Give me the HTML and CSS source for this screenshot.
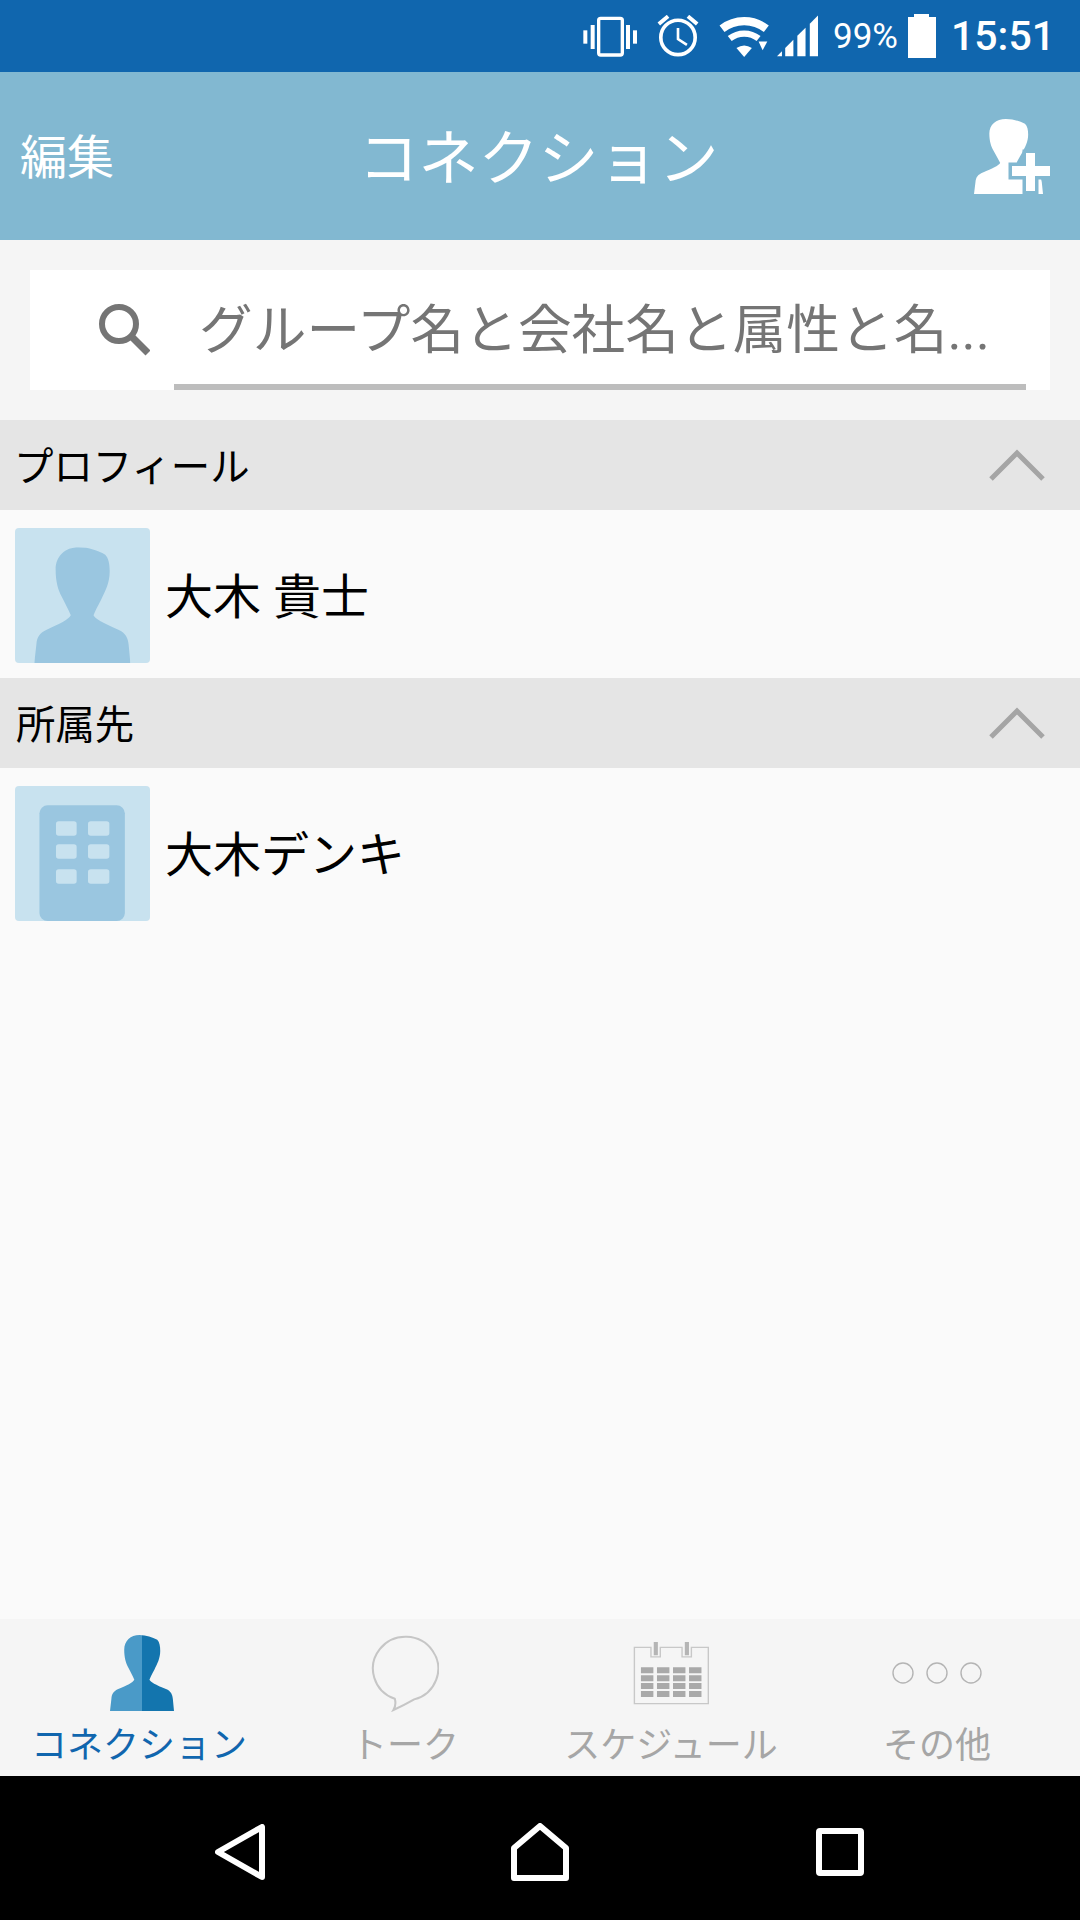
FILE: index.html
```html
<!DOCTYPE html>
<html lang="ja">
<head>
    <meta charset="UTF-8">
    <meta name="viewport" content="width=device-width, initial-scale=1.0">
    <title>コネクション</title>
    <link rel="stylesheet" href="styles.css">
</head>
<body>
    <!-- Shared silhouette -->
    <svg class="sprite" aria-hidden="true">
        <defs>
            <symbol id="person" viewBox="56 58 279 347" preserveAspectRatio="none">
                <path d="M185 58C215 58 240 68 262 80C272 90 275 110 275 130C275 165 262 190 250 215C240 235 232 250 228 262C232 272 255 285 300 305C322 315 328 330 330 350L335 405H56L62 350C64 325 72 315 92 305C130 288 155 275 162 262C155 245 145 225 135 205C125 185 118 160 118 125C118 85 145 58 185 58Z"/>
            </symbol>
            <linearGradient id="split">
                <stop offset="0.5" stop-color="#4a9ac8"/>
                <stop offset="0.5" stop-color="#1375ae"/>
            </linearGradient>
        </defs>
    </svg>

    <div class="app">
        <!-- Status Bar -->
        <div class="status-bar">
            <svg class="ic-vibrate" viewBox="68 45 162 123" fill="#fff">
                <rect x="69" y="88" width="12" height="40"/>
                <rect x="91" y="72" width="12" height="72"/>
                <rect x="115" y="52" width="71" height="110" rx="6" fill="none" stroke="#fff" stroke-width="10"/>
                <rect x="197" y="72" width="12" height="72"/>
                <rect x="218" y="88" width="12" height="40"/>
            </svg>
            <svg class="ic-alarm" viewBox="292 45 126 127" fill="none" stroke="#fff">
                <circle cx="355" cy="113" r="52" stroke-width="11"/>
                <path d="M355 84V118L382 135" stroke-width="8"/>
                <path d="M297 72L325 49M385 49L413 72" stroke-width="12"/>
            </svg>
            <svg class="ic-wifi" viewBox="478 50 152 125" fill="#fff">
                <path d="M487 91A107 107 0 0 1 619 91" fill="none" stroke="#fff" stroke-width="24"/>
                <path d="M510 120A70 70 0 0 1 596 120" fill="none" stroke="#fff" stroke-width="19"/>
                <path d="M553 175L530 148Q553 133 576 148Z"/>
                <path d="M596 129H622L608 155Z"/>
            </svg>
            <svg class="ic-signal" viewBox="650 48 125 125" fill="#fff">
                <path d="M650 172L665 157V172Z"/>
                <path d="M675 147L700 122V172H675Z"/>
                <path d="M712 110L737 85V172H712Z"/>
                <path d="M750 73L775 48V172H750Z"/>
            </svg>
            <span class="battery-text">99%</span>
            <svg class="ic-battery" viewBox="0 0 28 44" fill="#fff">
                <path d="M0 3H6V0H21V3H28V44H0Z"/>
            </svg>
            <span class="clock">15:51</span>
        </div>

        <!-- Header -->
        <header class="header">
            <span class="edit-btn">編集</span>
            <h1 class="title">コネクション</h1>
            <svg class="add-btn" viewBox="0 0 76 75">
                <use href="#person" width="69" height="75" fill="#fff"/>
                <path d="M38 47H52V34H61V47H76V57H61V72H52V57H38Z" fill="#82b8d1" stroke="#82b8d1" stroke-width="7"/>
                <path d="M38 47H52V34H61V47H76V57H61V72H52V57H38Z" fill="#fff"/>
            </svg>
        </header>

        <!-- Search -->
        <div class="search-area">
            <div class="search-box">
                <svg class="search-icon" viewBox="0 0 52 52" fill="none" stroke="#757575">
                    <circle cx="21" cy="20" r="17" stroke-width="6"/>
                    <path d="M33 32L50 49" stroke-width="7"/>
                </svg>
                <div class="search-field">グループ名と会社名と属性と名...</div>
            </div>
        </div>

        <!-- List -->
        <main class="list">
            <div class="section-head">
                <span>プロフィール</span>
                <svg class="chevron" viewBox="0 0 56 32"><path d="M2 30L28 4L54 30"/></svg>
            </div>
            <div class="row">
                <svg class="tile" viewBox="0 0 392 405" preserveAspectRatio="none">
                    <use href="#person" x="56" y="58" width="279" height="347" fill="#9ac6e0"/>
                </svg>
                <span class="row-name">大木 貴士</span>
            </div>

            <div class="section-head">
                <span class="section-kanji">所属先</span>
                <svg class="chevron" viewBox="0 0 56 32"><path d="M2 30L28 4L54 30"/></svg>
            </div>
            <div class="row">
                <svg class="tile" viewBox="0 0 392 405" preserveAspectRatio="none">
                    <rect x="71" y="58" width="248" height="347" rx="24" fill="#9ac6e0"/>
                    <g fill="#c8e2ef">
                        <rect x="119" y="106" width="60" height="43" rx="8"/>
                        <rect x="212" y="106" width="62" height="43" rx="8"/>
                        <rect x="119" y="175" width="60" height="43" rx="8"/>
                        <rect x="212" y="175" width="62" height="43" rx="8"/>
                        <rect x="119" y="250" width="60" height="43" rx="8"/>
                        <rect x="212" y="250" width="62" height="43" rx="8"/>
                    </g>
                </svg>
                <span class="row-name">大木デンキ</span>
            </div>
        </main>

        <!-- Tab Bar -->
        <nav class="tabs">
            <div class="tab active">
                <div class="tab-icon">
                    <svg class="ic-person" viewBox="0 0 64 76"><use href="#person" width="64" height="76" fill="url(#split)"/></svg>
                </div>
                <span>コネクション</span>
            </div>
            <div class="tab">
                <div class="tab-icon">
                    <svg class="ic-bubble" viewBox="1080 102 200 232" preserveAspectRatio="none" fill="none" stroke="#c6c6c6" stroke-width="6">
                        <path d="M1207 296A96 96 0 1 0 1150 294Q1155 312 1146 328Q1180 312 1207 296Z"/>
                    </svg>
                </div>
                <span>トーク</span>
            </div>
            <div class="tab">
                <div class="tab-icon">
                    <svg class="ic-calendar" viewBox="273 125 220 190" preserveAspectRatio="none" fill="none">
                        <path d="M325 141H277V311H491V141H442V170H415V141H352V170H325Z" stroke="#c8c8c8" stroke-width="4"/>
                        <path d="M339 125V165M429 125V165" stroke="#b5b5b5" stroke-width="12"/>
                        <path d="M296 210H472M296 234H472M296 258H472M296 282H472" stroke="#a9a9a9" stroke-width="18" stroke-dasharray="36 10.4"/>
                    </svg>
                </div>
                <span>スケジュール</span>
            </div>
            <div class="tab">
                <div class="tab-icon">
                    <svg class="ic-more" viewBox="0 0 90 22" fill="none" stroke="#b4b4b4" stroke-width="1.4">
                        <circle cx="11" cy="11" r="10"/>
                        <circle cx="45" cy="11" r="10"/>
                        <circle cx="79" cy="11" r="10"/>
                    </svg>
                </div>
                <span>その他</span>
            </div>
        </nav>

        <!-- Android Navigation -->
        <div class="nav-bar">
            <svg class="nav-back" viewBox="0 0 50 56"><path d="M3 28L47 3V53Z"/></svg>
            <svg class="nav-home" viewBox="0 0 58 58"><path d="M29 3L55 25V55H3V25Z"/></svg>
            <svg class="nav-square" viewBox="0 0 48 48"><rect x="3" y="3" width="42" height="42" rx="1"/></svg>
        </div>
    </div>
</body>
</html>
```

FILE: styles.css
```css
/* General Reset */
* {
    box-sizing: border-box;
    margin: 0;
    padding: 0;
}

body {
    width: 1080px;
    height: 1920px;
    overflow: hidden;
    font-family: Roboto, "Noto Sans CJK JP", sans-serif;
    background-color: #fafafa;
}

.sprite {
    position: absolute;
    width: 0;
    height: 0;
}

.app {
    display: flex;
    flex-direction: column;
    height: 1920px;
}

/* Status Bar */
.status-bar {
    display: flex;
    align-items: center;
    justify-content: flex-end;
    height: 72px;
    padding-right: 25px;
    background-color: #1066ae;
    color: #fff;
}

.ic-vibrate {
    width: 54px;
    height: 41px;
    margin-right: 20px;
}

.ic-alarm {
    width: 42px;
    height: 42px;
    margin-right: 20px;
}

.ic-wifi {
    width: 51px;
    height: 42px;
    margin-right: 7px;
}

.ic-signal {
    width: 41px;
    height: 42px;
    margin-right: 15px;
}

.battery-text {
    font-size: 35px;
    margin-right: 10px;
}

.ic-battery {
    width: 28px;
    height: 44px;
    margin-right: 15px;
}

.clock {
    font-size: 41px;
    font-weight: 500;
}

/* Header */
.header {
    display: grid;
    grid-template-columns: 1fr auto 1fr;
    align-items: center;
    height: 168px;
    padding: 0 20px;
    background-color: #82b8d1;
    color: #fff;
}

.edit-btn {
    font-size: 47px;
    margin-bottom: 5px;
}

.title {
    font-size: 60px;
    font-weight: 400;
    margin: 0 3px 6px 0;
}

.add-btn {
    width: 76px;
    height: 75px;
    justify-self: end;
    margin-right: 10px;
}

/* Search */
.search-area {
    height: 180px;
    padding: 30px;
    background-color: #f5f5f5;
}

.search-box {
    display: flex;
    align-items: center;
    height: 120px;
    padding: 0 24px 0 68px;
    background-color: #fff;
}

.search-icon {
    width: 52px;
    height: 52px;
    flex-shrink: 0;
    margin-right: 24px;
}

.search-field {
    flex: 1;
    height: 120px;
    padding-left: 25px;
    border-bottom: 6px solid #bdbdbd;
    color: #757575;
    font-size: 53.7px;
    line-height: 122px;
    white-space: nowrap;
}

/* List */
.list {
    flex: 1;
    background-color: #fafafa;
}

.section-head {
    display: flex;
    align-items: center;
    justify-content: space-between;
    height: 90px;
    padding: 0 35px 0 14px;
    background-color: #e5e5e5;
    color: #000;
    font-size: 39.4px;
}

.section-head span {
    margin-bottom: 4px;
}

.section-kanji {
    margin-left: 2px;
}

.chevron {
    width: 56px;
    height: 32px;
    fill: none;
    stroke: #a5a5a5;
    stroke-width: 5;
}

.row {
    display: flex;
    align-items: center;
    gap: 15px;
    height: 168px;
    padding: 3px 15px 0;
}

.tile {
    width: 135px;
    height: 135px;
    background-color: #c8e2ef;
    border-radius: 4px;
}

.row-name {
    color: #000;
    font-size: 48px;
    margin-bottom: 5px;
}

/* Tab Bar */
.tabs {
    display: grid;
    grid-template-columns: repeat(4, 1fr);
    height: 157px;
    padding: 16px 10px 0 6px;
    background-color: #f5f5f5;
}

.tab {
    display: flex;
    flex-direction: column;
    align-items: center;
    color: #a6a6a6;
    font-size: 36px;
    line-height: 50px;
}

.tab.active {
    color: #1066ae;
}

.tab-icon {
    display: flex;
    align-items: center;
    justify-content: center;
    height: 76px;
    margin-bottom: 10px;
}

.ic-person {
    width: 64px;
    height: 76px;
    margin-left: 5px;
}

.ic-bubble {
    width: 68px;
    height: 77px;
}

.ic-calendar {
    width: 76px;
    height: 63px;
}

.ic-more {
    width: 90px;
    height: 22px;
}

/* Android Navigation */
.nav-bar {
    display: flex;
    align-items: center;
    height: 144px;
    padding: 8px 0 0 215px;
    background-color: #000;
}

.nav-bar svg {
    fill: none;
    stroke: #fff;
    stroke-width: 6;
    stroke-linejoin: round;
}

.nav-back {
    width: 50px;
    height: 56px;
}

.nav-home {
    width: 58px;
    height: 58px;
    margin-left: 246px;
}

.nav-square {
    width: 48px;
    height: 48px;
    margin-left: 247px;
}
```
